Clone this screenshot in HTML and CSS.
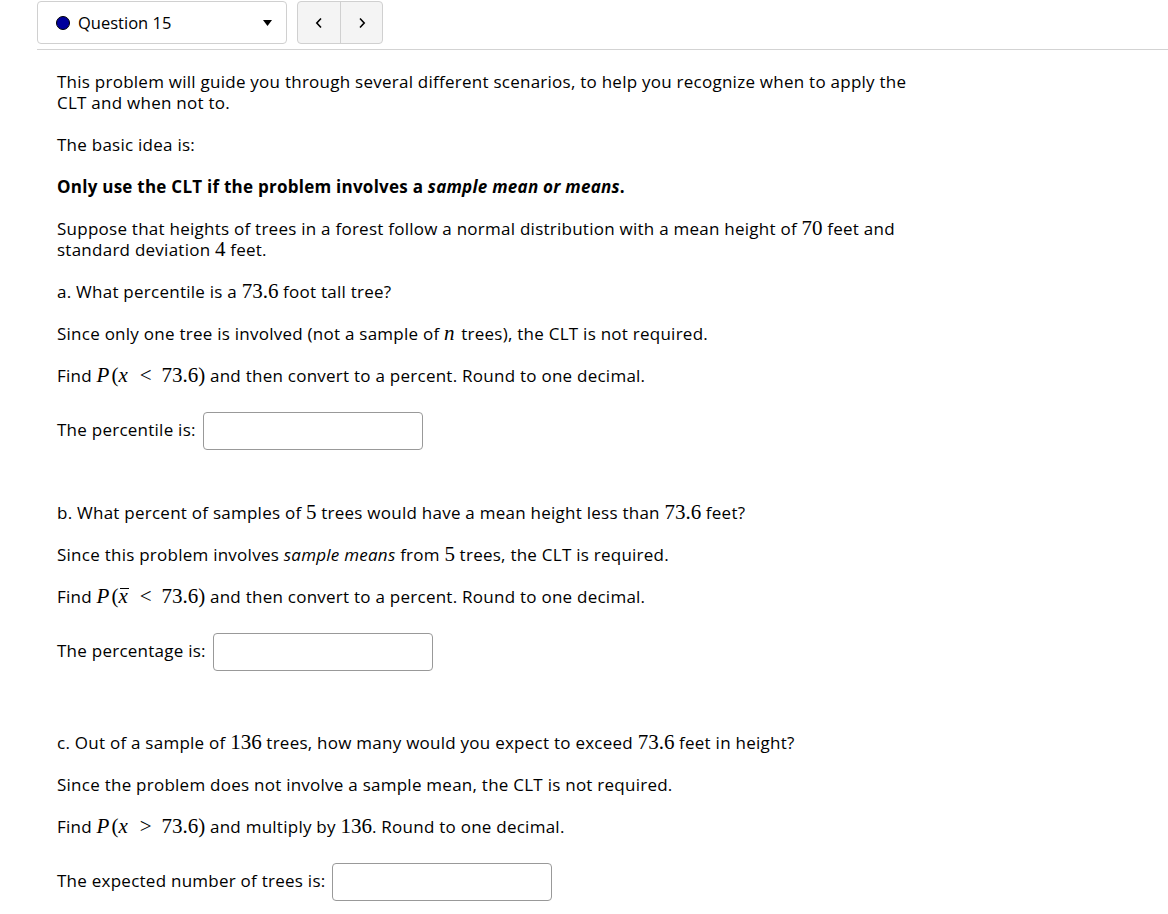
FILE: index.html
```html
<!DOCTYPE html>
<html lang="en">
<head>
<meta charset="utf-8">
<title>Question 15</title>
<link rel="stylesheet" href="styles.css">
</head>
<body>
<header class="topbar">
  <div class="qselect">
    <span class="dot"></span>
    <span class="qlabel">Question 15</span>
    <svg class="caret" width="9" height="6" viewBox="0 0 9 6"><path d="M0 0 H9 L4.5 6 Z" fill="#000"/></svg>
  </div>
  <div class="navgroup">
    <button class="navbtn" type="button" aria-label="Previous">
      <svg width="8" height="12" viewBox="0 0 8 12"><path d="M6 1.5 L1.8 6 L6 10.5" fill="none" stroke="#000" stroke-width="1.6"/></svg>
    </button>
    <button class="navbtn" type="button" aria-label="Next">
      <svg width="8" height="12" viewBox="0 0 8 12"><path d="M2 1.5 L6.2 6 L2 10.5" fill="none" stroke="#000" stroke-width="1.6"/></svg>
    </button>
  </div>
</header>
<main class="question">
  <p>This problem will guide you through several different scenarios, to help you recognize when to apply the CLT and when not to.</p>
  <p>The basic idea is:</p>
  <p><strong>Only use the CLT if the problem involves a <em>sample mean or means</em>.</strong></p>
  <p>Suppose that heights of trees in a forest follow a normal distribution with a mean height of <span class="m">70</span> feet and standard deviation <span class="m">4</span> feet.</p>
  <p>a. What percentile is a <span class="m">73.6</span> foot tall tree?</p>
  <p>Since only one tree is involved (not a sample of <span class="m"><i>n</i></span> trees), the CLT is not required.</p>
  <p>Find <span class="m"><i>P</i>(<i>x</i><span class="rel">&lt;</span>73.6)</span> and then convert to a percent. Round to one decimal.</p>
  <div class="answer first">
    <label for="a1">The percentile is:</label>
    <input id="a1" class="ans" type="text">
  </div>

  <p>b. What percent of samples of <span class="m">5</span> trees would have a mean height less than <span class="m">73.6</span> feet?</p>
  <p>Since this problem involves <em>sample means</em> from <span class="m">5</span> trees, the CLT is required.</p>
  <p>Find <span class="m"><i>P</i>(<i class="xbar">x</i><span class="rel">&lt;</span>73.6)</span> and then convert to a percent. Round to one decimal.</p>
  <div class="answer second">
    <label for="a2">The percentage is:</label>
    <input id="a2" class="ans" type="text">
  </div>

  <p>c. Out of a sample of <span class="m">136</span> trees, how many would you expect to exceed <span class="m">73.6</span> feet in height?</p>
  <p>Since the problem does not involve a sample mean, the CLT is not required.</p>
  <p>Find <span class="m"><i>P</i>(<i>x</i><span class="rel">&gt;</span>73.6)</span> and multiply by <span class="m">136</span>. Round to one decimal.</p>
  <div class="answer">
    <label for="a3">The expected number of trees is:</label>
    <input id="a3" class="ans" type="text">
  </div>
</main>
</body>
</html>
```
FILE: styles.css
```css
html, body {
  margin: 0;
  padding: 0;
  background: #fff;
}
body {
  font-family: "Open Sans", "Noto Sans", "DejaVu Sans", sans-serif;
  font-size: 17px;
  letter-spacing: 0.25px;
  line-height: 21px;
  color: #000;
}
.topbar {
  display: flex;
  align-items: stretch;
  gap: 10px;
  margin-left: 37px;
  padding-top: 1px;
  padding-bottom: 5px;
  border-bottom: 1px solid #d3d3d3;
}
.qselect {
  box-sizing: border-box;
  width: 250px;
  height: 43px;
  border: 1px solid #d0d0d0;
  border-radius: 4px;
  display: flex;
  align-items: center;
  padding: 0 14px 0 18px;
}
.dot {
  box-sizing: border-box;
  width: 14px;
  height: 14px;
  border-radius: 50%;
  background: #00009c;
  border: 1px solid #000;
  margin-right: 8px;
}
.qlabel {
  flex: 1;
  font-size: 16.5px;
  letter-spacing: 0;
}
.caret {
  display: block;
}
.navgroup {
  display: flex;
  box-sizing: border-box;
  height: 43px;
  border: 1px solid #d0d0d0;
  border-radius: 4px;
  background: #f4f4f4;
  overflow: hidden;
}
.navbtn {
  width: 42px;
  height: 100%;
  border: 0;
  background: transparent;
  display: flex;
  align-items: center;
  justify-content: center;
  padding: 0;
}
.navbtn + .navbtn {
  border-left: 1px solid #d0d0d0;
}
.question {
  padding: 21px 0 0 57px;
  width: 862px;
}
.question p {
  margin: 0 0 21px;
}
.m {
  font-family: "Liberation Serif", "Times New Roman", serif;
  font-size: 21px;
  letter-spacing: 0;
  line-height: 1;
}
.m i {
  font-style: italic;
  padding-right: 2px;
}
.rel {
  margin: 0 10px;
}
.xbar {
  position: relative;
}
.xbar::before {
  content: "";
  position: absolute;
  left: 2px;
  right: 1px;
  top: 4px;
  border-top: 1px solid #000;
}
.answer {
  display: flex;
  align-items: center;
  margin-top: 26px;
  margin-bottom: 52px;
}
.answer.second {
  margin-bottom: 61px;
}
.answer label {
  margin-right: 7px;
  padding-bottom: 3px;
}
.ans {
  box-sizing: border-box;
  width: 220px;
  height: 38px;
  border: 1px solid #999;
  border-radius: 4px;
  background: #fff;
  font: inherit;
  padding: 0 8px;
}
```
